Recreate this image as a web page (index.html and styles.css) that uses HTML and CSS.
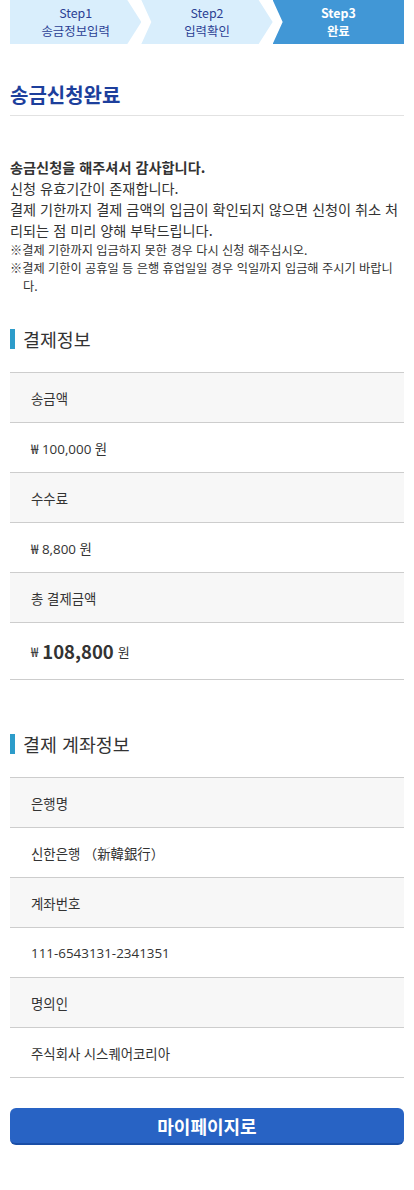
FILE: index.html
```html
<!DOCTYPE html>
<html lang="ko">
<head>
    <meta charset="UTF-8">
    <meta name="viewport" content="width=device-width, initial-scale=1.0">
    <title>송금신청완료</title>
    <link rel="stylesheet" href="styles.css">
</head>
<body>
    <div class="page">
        <ol class="steps">
            <li class="step step-first"><span>Step1</span><span>송금정보입력</span></li>
            <li class="step step-mid"><span>Step2</span><span>입력확인</span></li>
            <li class="step step-last active"><span>Step3</span><span>완료</span></li>
        </ol>

        <h1 class="page-title">송금신청완료</h1>

        <div class="intro">
            <p class="thanks">송금신청을 해주셔서 감사합니다.</p>
            <p>신청 유효기간이 존재합니다.</p>
            <p>결제 기한까지 결제 금액의 입금이 확인되지 않으면 신청이 취소 처리되는 점 미리 양해 부탁드립니다.</p>
            <p class="note">※결제 기한까지 입금하지 못한 경우 다시 신청 해주십시오.</p>
            <p class="note">※결제 기한이 공휴일 등 은행 휴업일일 경우 익일까지 입금해 주시기 바랍니다.</p>
        </div>

        <h2 class="section-title">결제정보</h2>
        <dl class="info-table">
            <dt>송금액</dt>
            <dd>₩ 100,000 원</dd>
            <dt>수수료</dt>
            <dd>₩ 8,800 원</dd>
            <dt>총 결제금액</dt>
            <dd class="total"><span class="unit">₩</span> <strong>108,800</strong> <span class="unit">원</span></dd>
        </dl>

        <h2 class="section-title second">결제 계좌정보</h2>
        <dl class="info-table">
            <dt>은행명</dt>
            <dd>신한은행 （新韓銀行）</dd>
            <dt>계좌번호</dt>
            <dd>111-6543131-2341351</dd>
            <dt>명의인</dt>
            <dd>주식회사 시스퀘어코리아</dd>
        </dl>

        <button class="mypage-btn" type="button">마이페이지로</button>
    </div>
</body>
</html>
```

FILE: styles.css
```css
* {
    box-sizing: border-box;
    font-family: "Noto Sans CJK KR", "Noto Sans", sans-serif;
}

body {
    margin: 0;
    background: #fff;
    color: #333;
}

.page {
    padding: 0 10px 40px;
}

/* Step indicator */
.steps {
    display: flex;
    margin: 0;
    padding: 0;
    list-style: none;
    height: 44px;
}

.step {
    flex: 1;
    display: flex;
    flex-direction: column;
    justify-content: center;
    align-items: center;
    background: #d9eefc;
    color: #2b3f94;
    font-size: 12.4px;
    line-height: 18px;
}

.step-first {
    clip-path: polygon(0 0, calc(100% - 14px) 0, 100% 50%, calc(100% - 14px) 100%, 0 100%);
}

.step-mid {
    clip-path: polygon(0 0, calc(100% - 14px) 0, 100% 50%, calc(100% - 14px) 100%, 0 100%, 10px 50%);
}

.step-last {
    clip-path: polygon(0 0, 100% 0, 100% 100%, 0 100%, 10px 50%);
}

.step.active {
    background: #4197d6;
    color: #fff;
    font-weight: bold;
}

/* Title */
.page-title {
    margin: 37px 0 0;
    padding-bottom: 6px;
    border-bottom: 1px solid #e2e2e2;
    font-size: 20px;
    line-height: 28px;
    font-weight: bold;
    color: #1d3f9c;
}

.intro {
    margin-top: 41px;
}

.intro p {
    margin: 0;
    font-size: 14.2px;
    line-height: 21px;
    color: #333;
}

.intro .thanks {
    font-weight: bold;
}

.intro .note {
    font-size: 12.2px;
    line-height: 18px;
    padding-left: 13px;
    text-indent: -13px;
}

/* Section headings */
.section-title {
    margin: 34px 0 23px;
    padding-left: 8px;
    border-left: 5px solid #2d9cca;
    font-size: 18.4px;
    line-height: 20px;
    font-weight: normal;
    color: #333;
}

.section-title.second {
    margin-top: 54px;
}

/* Info tables */
.info-table {
    margin: 0;
    border-top: 1px solid #cdcdcd;
}

.info-table dt,
.info-table dd {
    margin: 0;
    height: 50px;
    display: flex;
    align-items: center;
    padding-left: 21px;
    border-bottom: 1px solid #cdcdcd;
    font-size: 13.4px;
    color: #333;
}

.info-table dt {
    background: #f7f7f7;
}

.info-table dd {
    font-family: "Open Sans", "Noto Sans CJK KR", sans-serif;
}

.info-table dd.total {
    height: 57px;
    gap: 4px;
}

.total .unit {
    font-size: 13px;
}

.total strong {
    font-size: 18.5px;
    font-weight: bold;
}

/* Button */
.mypage-btn {
    display: block;
    width: 100%;
    height: 37px;
    margin-top: 30px;
    border: none;
    border-bottom: 2px solid #1a4ea6;
    border-radius: 6px;
    background: #2863c4;
    color: #fff;
    font-size: 18px;
    font-weight: bold;
    cursor: pointer;
}
```
